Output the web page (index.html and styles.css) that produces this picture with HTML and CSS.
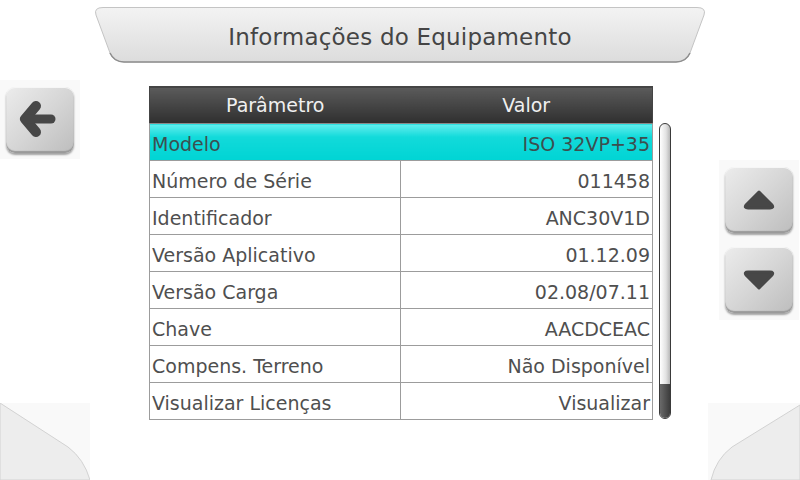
FILE: index.html
```html
<!DOCTYPE html>
<html lang="pt">
<head>
<meta charset="utf-8">
<title>Informações do Equipamento</title>
<link rel="stylesheet" href="styles.css">
</head>
<body>
<div class="screen">
  <header class="titlebar">
    <svg class="titlebar-shape" width="614" height="56" viewBox="0 0 614 56">
      <defs>
        <linearGradient id="tg" x1="0" y1="0" x2="0" y2="1">
          <stop offset="0" stop-color="#f3f3f3"/>
          <stop offset="1" stop-color="#dcdcdc"/>
        </linearGradient>
      </defs>
      <path d="M10 0.5 H604 Q613.5 0.5 611 8 L597 46 Q593 55 583 55 H31 Q21 55 17 46 L3 8 Q0.5 0.5 10 0.5 Z" fill="url(#tg)" stroke="#c4c4c4" stroke-width="1"/>
      <path d="M17 46 Q21 55 31 55 H583 Q593 55 597 46" fill="none" stroke="#8e8e8e" stroke-width="1.5"/>
    </svg>
    <h1 class="title">Informações do Equipamento</h1>
  </header>

  <main class="main">
    <div class="side side-left">
      <button class="btn" aria-label="Voltar">
        <svg width="68" height="66" viewBox="0 0 68 66">
          <path d="M30 19 L19 32 L30 45" fill="none" stroke="#474747" stroke-width="10" stroke-linecap="round" stroke-linejoin="round"/>
          <path d="M22 32 H45" fill="none" stroke="#474747" stroke-width="9" stroke-linecap="round"/>
        </svg>
      </button>
    </div>

    <div class="center">
      <table class="info">
        <thead>
          <tr><th>Parâmetro</th><th>Valor</th></tr>
        </thead>
        <tbody>
          <tr class="sel"><td>Modelo</td><td class="v">ISO 32VP+35</td></tr>
          <tr><td>Número de Série</td><td class="v">011458</td></tr>
          <tr><td>Identificador</td><td class="v">ANC30V1D</td></tr>
          <tr><td>Versão Aplicativo</td><td class="v">01.12.09</td></tr>
          <tr><td>Versão Carga</td><td class="v">02.08/07.11</td></tr>
          <tr><td>Chave</td><td class="v">AACDCEAC</td></tr>
          <tr><td>Compens. Terreno</td><td class="v">Não Disponível</td></tr>
          <tr><td>Visualizar Licenças</td><td class="v">Visualizar</td></tr>
        </tbody>
      </table>
      <div class="scrollbar"><div class="thumb"></div></div>
    </div>

    <div class="side side-right">
      <button class="btn" aria-label="Subir">
        <svg width="68" height="66" viewBox="0 0 68 66">
          <path d="M34 25 L47 38 Q49 41 45 41 H23 Q19 41 21 38 Z" fill="#474747" stroke="#474747" stroke-width="3" stroke-linejoin="round"/>
        </svg>
      </button>
      <button class="btn" aria-label="Descer">
        <svg width="68" height="66" viewBox="0 0 68 66">
          <path d="M34 41 L47 28 Q49 25 45 25 H23 Q19 25 21 28 Z" fill="#474747" stroke="#474747" stroke-width="3" stroke-linejoin="round"/>
        </svg>
      </button>
    </div>
  </main>

  <svg class="corner corner-left" width="90" height="77" viewBox="0 0 90 77">
    <rect width="90" height="77" fill="#f9f9f9"/>
    <path d="M0 0 L68 44 Q84 56 90 77 H0 Z" fill="#ededed" stroke="#d2d2d2" stroke-width="1"/>
  </svg>
  <svg class="corner corner-right" width="92" height="77" viewBox="0 0 92 77">
    <rect width="92" height="77" fill="#f9f9f9"/>
    <path d="M92 2 L24 44 Q8 56 3 77 H92 Z" fill="#ededed" stroke="#d2d2d2" stroke-width="1"/>
  </svg>
</div>
</body>
</html>
```

FILE: styles.css
```css
* { box-sizing: border-box; }
html, body { margin: 0; padding: 0; background: #fff; }
.screen {
  position: relative;
  width: 800px;
  height: 480px;
  overflow: hidden;
  background: #fff;
  font-family: "DejaVu Sans", "Liberation Sans", sans-serif;
  color: #444;
}
.titlebar {
  position: relative;
  width: 614px;
  height: 56px;
  margin: 7px 0 0 93px;
  display: flex;
  align-items: center;
  justify-content: center;
}
.titlebar-shape { position: absolute; left: 0; top: 0; }
.title {
  position: relative;
  margin: 4px 0 0 0;
  font-size: 23px;
  font-weight: normal;
  color: #454545;
  letter-spacing: 0.2px;
}
.main {
  display: flex;
  align-items: flex-start;
}
.side {
  display: flex;
  flex-direction: column;
  background: #f9f9f9;
  width: 80px;
}
.side-left {
  margin-top: 17px;
  padding: 7px 6px 6px 6px;
}
.side-right {
  margin-top: 97px;
  margin-left: 48px;
  padding: 7px 6px 7px 6px;
  gap: 14px;
}
.btn {
  width: 68px;
  height: 66px;
  padding: 0;
  border: none;
  border-radius: 9px;
  background: linear-gradient(135deg, #ececec 0%, #d6d6d6 50%, #bdbdbd 100%);
  box-shadow: inset 0 1px 0 #f6f6f6, inset 0 -2px 1px #9a9a9a, 0 2px 2px rgba(0,0,0,0.35);
  display: block;
}
.btn svg { display: block; }
.center {
  display: flex;
  align-items: flex-start;
  gap: 6px;
  margin-left: 69px;
  margin-top: 23px;
}
.info {
  border-collapse: collapse;
  width: 504px;
  table-layout: fixed;
  font-size: 19px;
}
.info th, .info td {
  border: 1px solid #9c9c9c;
  height: 37px;
  padding: 0 2px 0 2px;
  white-space: nowrap;
  overflow: hidden;
}
.info th:first-child, .info td:first-child { width: 251px; }
.info th {
  height: 37px;
  background: linear-gradient(#5b5b5b, #2f2f2f);
  color: #f0f0f0;
  font-weight: normal;
  text-align: center;
  border-color: #444;
  border-bottom-color: #8a8a8a;
}
.info th:first-child { border-right: none; }
.info th + th { border-left: none; }
.info td { color: #4f4f4f; padding-top: 3px; }
.info td.v { text-align: right; }
.info tr.sel td {
  background: linear-gradient(#63eeee 0%, #12dada 35%, #00d4d4 100%);
  border-left-color: #9c9c9c;
  border-right-color: #9c9c9c;
  color: #3c4f4f;
}
.info tr.sel td:first-child { border-right: none; }
.info tr.sel td.v { border-left: none; }
.scrollbar {
  margin-top: 37px;
  width: 12px;
  height: 296px;
  border: 1.5px solid #3a3a3a;
  border-radius: 6px;
  background: linear-gradient(90deg, #ffffff 0%, #e2e2e2 60%, #b8b8b8 100%);
  display: flex;
  flex-direction: column;
  justify-content: flex-end;
  overflow: hidden;
}
.thumb {
  height: 34px;
  background: linear-gradient(90deg, #6a6a6a, #3c3c3c);
}
.corner { position: absolute; bottom: 0; }
.corner-left { left: 0; }
.corner-right { right: 0; }
```
